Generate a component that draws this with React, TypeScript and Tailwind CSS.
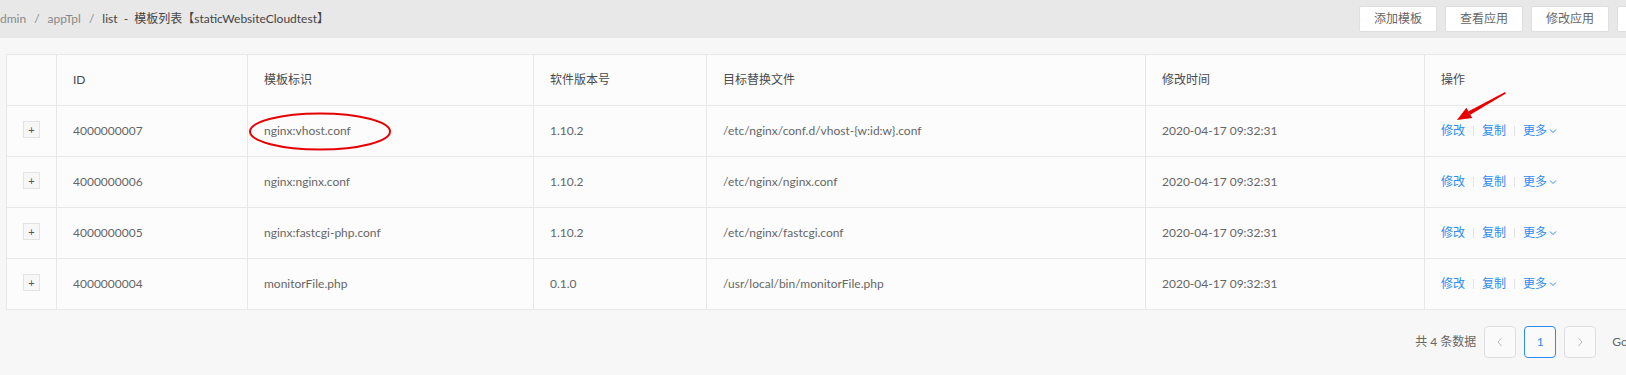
import React from "react";

const rows = [
  { id: "4000000007", key: "nginx:vhost.conf", ver: "1.10.2", file: "/etc/nginx/conf.d/vhost-{w:id:w}.conf", time: "2020-04-17 09:32:31" },
  { id: "4000000006", key: "nginx:nginx.conf", ver: "1.10.2", file: "/etc/nginx/nginx.conf", time: "2020-04-17 09:32:31" },
  { id: "4000000005", key: "nginx:fastcgi-php.conf", ver: "1.10.2", file: "/etc/nginx/fastcgi.conf", time: "2020-04-17 09:32:31" },
  { id: "4000000004", key: "monitorFile.php", ver: "0.1.0", file: "/usr/local/bin/monitorFile.php", time: "2020-04-17 09:32:31" },
];

const font = "font-['Lato','Noto_Sans_CJK_SC',sans-serif]";

function Sep() {
  return <span className="mx-[8px] inline-block h-[10px] w-px bg-[#e3e3e3]" />;
}

export default function App() {
  return (
    <div className={`w-full overflow-hidden bg-[#f7f7f7] text-[12px] ${font}`}>
      <div className="relative w-[1710px] h-[375px]">
        {/* top bar */}
        <div className="flex h-[38px] items-center justify-between bg-[#e8e8e8] pr-[15px]">
          <div className="flex items-center gap-[8px] text-[#888]">
            <span>dmin</span>
            <span>/</span>
            <span>appTpl</span>
            <span>/</span>
            <span className="text-[#444]">list&nbsp; - &nbsp;模板列表【staticWebsiteCloudtest】</span>
          </div>
          <div className="flex items-center gap-[8px]">
            {["添加模板", "查看应用", "修改应用", "删除应用"].map((b) => (
              <button
                key={b}
                className="h-[26px] w-[78px] rounded-[2px] border border-[#dedede] bg-white text-[12px] text-[#666]"
              >
                {b}
              </button>
            ))}
          </div>
        </div>

        {/* table */}
        <div className="pt-[16px] pl-[6px] pr-[6px]">
          <table className="w-full table-fixed border-collapse border border-[#e8e8e8] bg-[#fcfcfc] text-[#666]">
            <colgroup>
              <col className="w-[50px]" />
              <col className="w-[191px]" />
              <col className="w-[286px]" />
              <col className="w-[173px]" />
              <col className="w-[439px]" />
              <col className="w-[279px]" />
              <col />
            </colgroup>
            <thead>
              <tr className="h-[51px] text-left text-[#4a4a4a]">
                <th className="border border-[#e8e8e8] font-normal" />
                <th className="border border-[#e8e8e8] px-[16px] font-normal">ID</th>
                <th className="border border-[#e8e8e8] px-[16px] font-normal">模板标识</th>
                <th className="border border-[#e8e8e8] px-[16px] font-normal">软件版本号</th>
                <th className="border border-[#e8e8e8] px-[16px] font-normal">目标替换文件</th>
                <th className="border border-[#e8e8e8] px-[16px] font-normal">修改时间</th>
                <th className="border border-[#e8e8e8] px-[16px] font-normal">操作</th>
              </tr>
            </thead>
            <tbody>
              {rows.map((r) => (
                <tr key={r.id} className="h-[51px]">
                  <td className="border border-[#e8e8e8]">
                    <div className="mx-auto -mt-[3px] flex h-[17px] w-[17px] items-center justify-center border border-[#e3e3e3] bg-[#f7f7f7] text-[11px] leading-none text-[#555]">
                      +
                    </div>
                  </td>
                  <td className="border border-[#e8e8e8] px-[16px]">{r.id}</td>
                  <td className="border border-[#e8e8e8] px-[16px]">{r.key}</td>
                  <td className="border border-[#e8e8e8] px-[16px]">{r.ver}</td>
                  <td className="border border-[#e8e8e8] px-[16px]">{r.file}</td>
                  <td className="border border-[#e8e8e8] px-[16px]">{r.time}</td>
                  <td className="border border-[#e8e8e8] px-[16px]">
                    <div className="flex items-center text-[#2d8cf0]">
                      <span>修改</span>
                      <Sep />
                      <span>复制</span>
                      <Sep />
                      <span>更多</span>
                      <svg width="10" height="10" viewBox="0 0 10 10" className="ml-[1px]">
                        <path d="M2 3.5 L5 6.5 L8 3.5" fill="none" stroke="#2d8cf0" strokeWidth="1" />
                      </svg>
                    </div>
                  </td>
                </tr>
              ))}
            </tbody>
          </table>
        </div>

        {/* pagination */}
        <div className="mt-[16px] flex items-center justify-end pr-[10px] text-[#666]">
          <span className="mr-[8px]">共 4 条数据</span>
          <div className="mr-[8px] flex h-[32px] w-[32px] items-center justify-center rounded-[4px] border border-[#dcdee2] bg-[#fafafa]">
            <svg width="10" height="12" viewBox="0 0 10 12">
              <path d="M6.5 2 L3 6 L6.5 10" fill="none" stroke="#bbb" strokeWidth="1" />
            </svg>
          </div>
          <div className="mr-[8px] flex h-[32px] w-[32px] items-center justify-center rounded-[4px] border border-[#2d8cf0] bg-[#fafafa] text-[#2d8cf0]">
            1
          </div>
          <div className="mr-[16px] flex h-[32px] w-[32px] items-center justify-center rounded-[4px] border border-[#dcdee2] bg-[#fafafa]">
            <svg width="10" height="12" viewBox="0 0 10 12">
              <path d="M3.5 2 L7 6 L3.5 10" fill="none" stroke="#bbb" strokeWidth="1" />
            </svg>
          </div>
          <span className="mr-[8px]">Go to</span>
          <div className="h-[32px] w-[50px] rounded-[4px] border border-[#dcdee2] bg-white" />
        </div>

        {/* annotations */}
        <svg className="pointer-events-none absolute left-0 top-0" width="1710" height="375">
          <ellipse cx="320" cy="131.5" rx="70" ry="18" fill="none" stroke="#e60000" strokeWidth="2" />
          <polygon points="1505.9,93.4 1505.1,92 1468.2,111.4 1470.2,114.8" fill="#e60000" />
          <polygon points="1457,120 1472.2,118 1466.4,107.8" fill="#e60000" />
        </svg>
      </div>
    </div>
  );
}
